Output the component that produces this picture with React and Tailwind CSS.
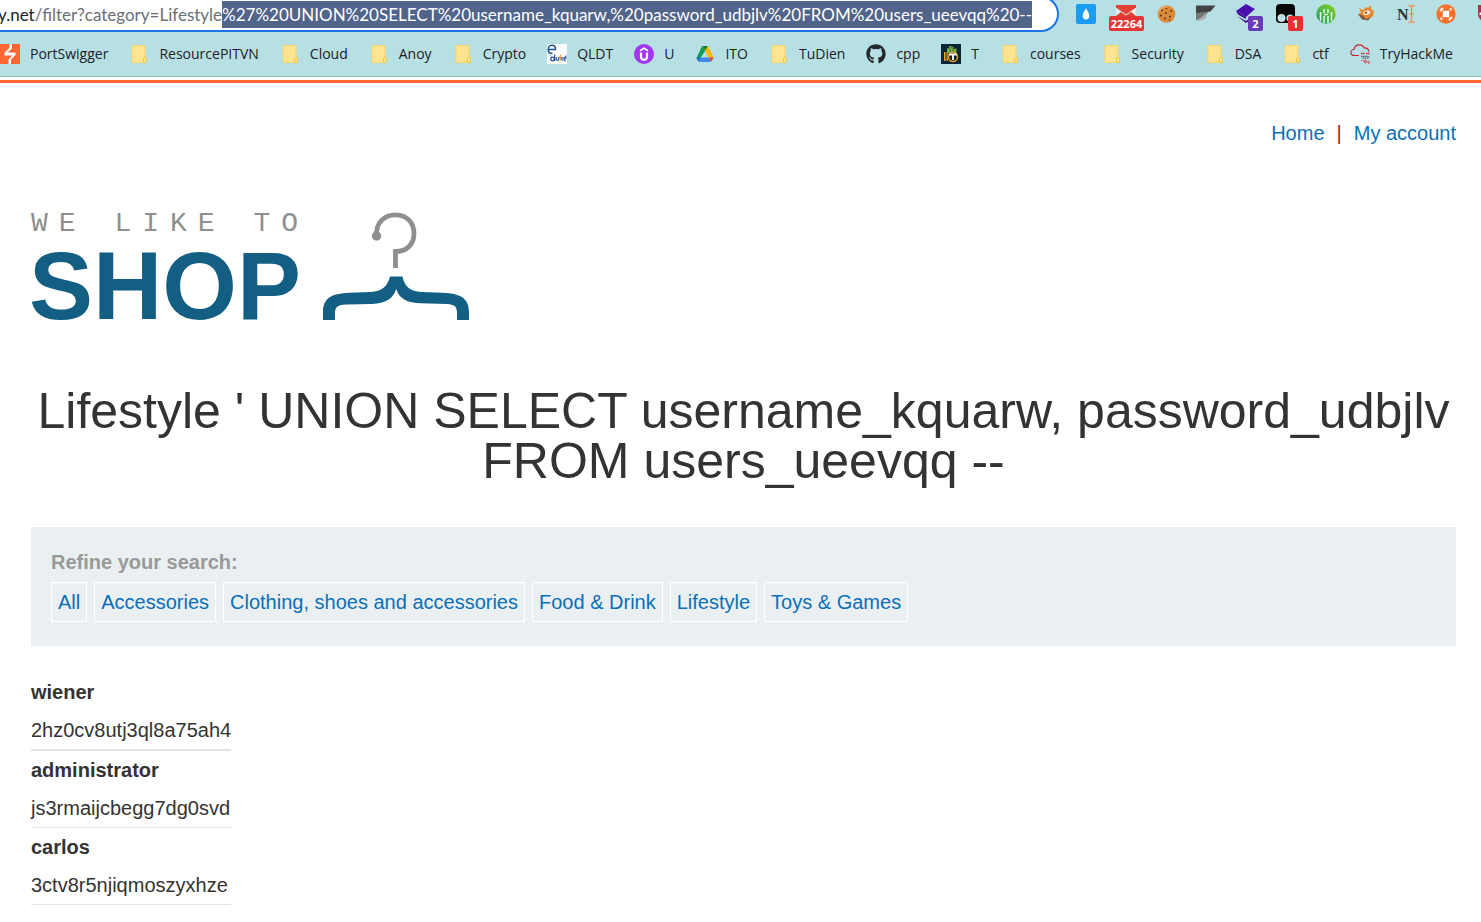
import React, { useEffect, useRef } from "react";
import { FaGithub } from "react-icons/fa";

const HOST = "y.net";
const PATH = "/filter?category=Lifestyle";
const PAYLOAD =
  "%27%20UNION%20SELECT%20username_kquarw,%20password_udbjlv%20FROM%20users_ueevqq%20--";

/* ---------- bookmark icons ---------- */

function Folder() {
  return (
    <svg viewBox="0 0 20 20" className="h-5 w-5 shrink-0" aria-hidden="true">
      <path d="M3 1.500h13v11.500l1.500 1v4.500h-14.500z" fill="#ffe592" stroke="#f7d568" strokeWidth="1" />
      <path d="M14.500 18.500v-4.500l1.500-1 1.500 1v4.500z" fill="#ffe592" stroke="#f2c84b" strokeWidth="1" />
    </svg>
  );
}

function PortSwigger() {
  return (
    <svg viewBox="0 0 20 20" className="h-5 w-5 shrink-0" aria-hidden="true">
      <rect width="20" height="20" fill="#ff6633" />
      <path d="M9.500 0H12v4.500L7.500 8.500h8v2.500l-4.500 4.500V20H8.500v-4.500l4-4H4.500V8.500L9.500 4z" fill="#fff" />
    </svg>
  );
}

function Edusoft() {
  return (
    <svg viewBox="0 0 20 20" className="h-5 w-5 shrink-0" aria-hidden="true">
      <rect width="20" height="20" fill="#fff" />
      <path d="M2 5.500h6.500C8.500 2.500 7 1.200 5 1.200 2.500 1.200 1.200 3.200 1.200 5.500S3 9.500 5.500 9.500" fill="none" stroke="#1c4f9c" strokeWidth="1.500" />
      <path d="M1 9.500c2 1 3 2.500 3.500 4" fill="none" stroke="#7da2d6" strokeWidth="1" />
      <circle cx="5.500" cy="15" r="1.800" fill="none" stroke="#27509c" strokeWidth="1.300" />
      <path d="M7.600 10.500v6.500M9.300 13v2.500q1.200 2 2.500 0V13" fill="none" stroke="#27509c" strokeWidth="1.200" />
      <path d="M14.500 9l-3 5h2l-1.500 5 3.500-6h-2z" fill="#f08c28" />
      <circle cx="15.800" cy="15" r="1.300" fill="none" stroke="#27509c" strokeWidth="1" />
      <path d="M18 17.500V13q.3-1.500 1.700-1M17 14h3" fill="none" stroke="#27509c" strokeWidth="1" />
    </svg>
  );
}

function Udemy() {
  return (
    <svg viewBox="0 0 20 20" className="h-5 w-5 shrink-0" aria-hidden="true">
      <circle cx="10" cy="10" r="10" fill="#a435f0" />
      <path d="M6 6.700L10 4.200l4 2.500" fill="none" stroke="#fff" strokeWidth="1.800" />
      <path d="M7 8.500v4.300a3 3 0 0 0 6 0V8.500" fill="none" stroke="#fff" strokeWidth="2.200" />
    </svg>
  );
}

function Drive() {
  return (
    <svg viewBox="0 0 20 20" className="h-5 w-5 shrink-0" aria-hidden="true">
      <path d="M7 2h1.500l2 4.500L5.500 14 4 18 1.500 14z" fill="#11a05a" />
      <path d="M7.500 2h5.300l6 11.500h-5.300z" fill="#fbb904" />
      <path d="M7.500 2h5.300L10.300 6.500z" fill="#188038" />
      <path d="M5.800 13.500h8L15.500 18H3.800z" fill="#4285f4" />
      <path d="M13.500 13.500h5.300L16 18z" fill="#ea4335" />
      <path d="M1.200 13.500h4.600L3.600 17.500z" fill="#1967d2" />
    </svg>
  );
}

function Tiger() {
  return (
    <svg viewBox="0 0 20 20" className="h-5 w-5 shrink-0" aria-hidden="true">
      <rect width="20" height="20" fill="#0b2437" />
      <path d="M6 8V4.500l2-.5V2h2.500v2l2-2v3l3-.5V9H6z" fill="#79ad3c" />
      <path d="M9 3v5M12 4v4" stroke="#2f6a2c" strokeWidth=".8" />
      <path d="M3 8h1.500v9H3zM5.500 8.500H7L6.500 12 7 17H5.500z" fill="#f0a31c" />
      <circle cx="12" cy="13" r="4.500" fill="#0b2437" stroke="#e5a11b" strokeWidth="1.500" />
      <path d="M8 9.500h8v2h-3V16h-2v-4.500H8z" fill="#f4f1e8" />
    </svg>
  );
}

function Github() {
  return <FaGithub className="h-5 w-5 shrink-0 text-[#24292e]" aria-hidden="true" />;
}

function TryHackMe() {
  return (
    <svg viewBox="0 0 20 20" className="h-5 w-5 shrink-0" aria-hidden="true">
      <path d="M9 11.500H4.500C2.300 11.500.8 10.300.8 8.500s1.500-3 3.200-3C4.500 2.500 6.800.8 9.300.8c2.400 0 4.200 1.300 4.900 3.200 2.500-.3 4.500 1.200 4.800 3.700" fill="none" stroke="#c8202f" strokeWidth="1.200" />
      <path d="M11 9.500h3.500M16 9.500h3.500" stroke="#c8202f" strokeWidth="1.300" strokeDasharray="1.500 .6" />
      <path d="M11 12.300h8.500M12.500 14.200h7" stroke="#59636f" strokeWidth="1.200" strokeDasharray="1.600 .5" />
      <path d="M11.500 16.500h3v2.500M15.500 19.500v-3l3.500 3v-3" fill="none" stroke="#c76a75" strokeWidth="1.100" />
    </svg>
  );
}

const BOOKMARKS = [
  ["PortSwigger", PortSwigger],
  ["ResourcePITVN", Folder],
  ["Cloud", Folder],
  ["Anoy", Folder],
  ["Crypto", Folder],
  ["QLDT", Edusoft],
  ["U", Udemy],
  ["ITO", Drive],
  ["TuDien", Folder],
  ["cpp", Github],
  ["T", Tiger],
  ["courses", Folder],
  ["Security", Folder],
  ["DSA", Folder],
  ["ctf", Folder],
  ["TryHackMe", TryHackMe],
];

/* ---------- extension icons ---------- */

function Badge({ className, children }) {
  return (
    <span className={"absolute rounded-xs text-center font-['Open_Sans',sans-serif] text-[11px] leading-[15px] font-bold text-white " + className}>
      {children}
    </span>
  );
}

function Glyph({ children }) {
  return (
    <svg viewBox="0 0 20 20" className="h-5 w-5" aria-hidden="true">
      {children}
    </svg>
  );
}

const EXTENSIONS = [
  {
    name: "Color drop",
    icon: (
      <Glyph>
        <rect width="20" height="20" rx="2" fill="#1a9cf0" />
        <path d="M10 4.200c1.800 3.300 3.300 5 3.300 7.500a3.300 3.700 0 0 1-6.600 0c0-2.500 1.500-4.200 3.300-7.500z" fill="#fff" />
      </Glyph>
    ),
  },
  {
    name: "Mail",
    icon: (
      <Glyph>
        <rect y="1" width="20" height="16" fill="#e0e0e0" />
        <path d="M0 1h20v2.500L10 10.500 0 3.500z" fill="#e34133" />
        <path d="M0 4.500l10 7 10-7V17H0z" fill="#e9eceb" />
        <path d="M0 12l5-4 5 3.500L15 8l5 4v5H0z" fill="#e34133" />
      </Glyph>
    ),
    badge: <Badge className="top-4 left-[3px] w-[35px] overflow-hidden bg-[#e33535]">22264</Badge>,
  },
  {
    name: "Cookies",
    icon: (
      <Glyph>
        <circle cx="10.500" cy="10" r="8.800" fill="#d98b3a" />
        <path d="M3 8a8 8 0 0 1 8-5.500" fill="none" stroke="#efb267" strokeWidth="1.500" />
        <g fill="#6b3a16">
          <circle cx="6" cy="6.500" r="1" /><circle cx="10" cy="9" r="1.100" />
          <circle cx="5" cy="11.500" r="1.100" /><circle cx="9" cy="14.500" r="1.100" />
          <circle cx="14" cy="12.500" r="1.100" /><circle cx="10.500" cy="4.500" r=".8" />
          <circle cx="13.500" cy="16" r=".8" /><circle cx="15" cy="7" r="1" />
        </g>
      </Glyph>
    ),
  },
  {
    name: "Proxy",
    icon: (
      <Glyph>
        <path d="M0 8.500L13 6l-3 5.500L0 16.500z" fill="#777" />
        <path d="M1 17.500L10 9v5.500z" fill="#aaa" />
        <path d="M0 1.500h19.500L14.500 7.500 0 9z" fill="#444" />
      </Glyph>
    ),
  },
  {
    name: "Layers",
    icon: (
      <Glyph>
        <path d="M0 7l10-7 9 5-9 8z" fill="#4a0fae" />
        <path d="M0 7l10 6v2L2 10.500zM1 12l9 5 6-4.500v2.500l-6 4z" fill="#3a0a90" />
      </Glyph>
    ),
    badge: <Badge className="top-4 left-[22px] w-[15px] bg-[#693bbb]">2</Badge>,
  },
  {
    name: "Monkey scripts",
    icon: (
      <Glyph>
        <rect x="0" y="0" width="19" height="19" rx="4" fill="#080808" />
        <circle cx="5.500" cy="14" r="3.600" fill="#b7e0e4" stroke="#fff" strokeWidth=".8" />
        <circle cx="14" cy="14" r="3.600" fill="#b7e0e4" />
      </Glyph>
    ),
    badge: <Badge className="top-4 left-[22px] w-[15px] bg-[#ec2d33]">1</Badge>,
  },
  {
    name: "Circuit",
    icon: (
      <Glyph>
        <defs>
          <linearGradient id="circuit" x1="0" y1="1" x2="1" y2="0">
            <stop offset="0" stopColor="#12a06a" />
            <stop offset="1" stopColor="#8fd01e" />
          </linearGradient>
        </defs>
        <circle cx="10" cy="10" r="9.700" fill="url(#circuit)" />
        <path d="M4.500 8v9M8 5v4M8 12v7M12 5v4M12 12v7M15.500 8v9M8 10.500h4" stroke="#e9f8ea" strokeWidth="1.500" />
      </Glyph>
    ),
  },
  {
    name: "Brush",
    icon: (
      <Glyph>
        <path d="M3 4l4 2 3-3 2 1 3-3v4l3 2-1 5-5 3.500-6-1-4-4 3-2z" fill="#e8872f" />
        <path d="M2 10l4 1 4 4 5-2-3 3.500-6-1z" fill="#7c5a44" />
        <path d="M7 8l5-2 3 2-3 3-4 0z" fill="#f5e3cb" />
        <path d="M9 8.500l2 .5" stroke="#5a3a22" strokeWidth="1.300" />
      </Glyph>
    ),
  },
  {
    name: "Text cursor",
    icon: (
      <Glyph>
        <text x="1" y="16" fontFamily="Liberation Serif, serif" fontSize="16" fontWeight="700" fill="#2d3436">N</text>
        <path d="M12.500 1.500q2.500 0 3 1.500.5-1.500 3-1.500M15.500 3v14M12.500 18.500q2.500 0 3-1.500.5 1.500 3 1.500M13.500 10h4" fill="none" stroke="#f09050" strokeWidth="1.300" />
      </Glyph>
    ),
  },
  {
    name: "Orange hub",
    icon: (
      <Glyph>
        <circle cx="10" cy="10" r="9.700" fill="#f6712b" />
        <circle cx="10" cy="10" r="3.200" fill="#fff" />
        <path d="M7 7l2 2M13 7l-2 2M7 13l2-2M13 13l-2-2" stroke="#fff" strokeWidth="2" />
        <path d="M4 7l3-3M13 16l3-3M14 4.500l1.500 1.500M4.500 14L6 15.500" stroke="#fff" strokeWidth="1.800" />
      </Glyph>
    ),
  },
  {
    name: "Shield",
    icon: (
      <Glyph>
        <path d="M2 1h18v9c0 5-5 8-9 10-4-2-9-5-9-10z" fill="#9b3b4b" />
        <path d="M3.500 8.500h14v2.500h-14z" fill="#fff" />
      </Glyph>
    ),
  },
];

/* ---------- browser chrome ---------- */

function AddressBar() {
  const ref = useRef(null);
  useEffect(() => {
    ref.current.focus();
    ref.current.setSelectionRange(PATH.length, PATH.length + PAYLOAD.length);
  }, []);
  return (
    <div className="-mt-1 flex h-9 min-w-0 flex-1 items-center overflow-hidden rounded-r-full border-2 border-l-0 border-[#1a73e8] bg-white font-['Lato',sans-serif] text-[17px] leading-[27px]">
      <label htmlFor="address" className="-ml-0.5 text-[#202124]">{HOST}</label>
      <input
        id="address"
        ref={ref}
        type="text"
        spellCheck={false}
        defaultValue={PATH + PAYLOAD}
        className="h-[27px] min-w-0 flex-1 text-[#6b7074] outline-none selection:bg-[#51648a] selection:text-white"
      />
    </div>
  );
}

function BrowserChrome() {
  return (
    <header className="overflow-hidden border-b border-[#96b3b6] bg-[#b7e0e4]">
      <div className="flex h-8 gap-[7px]">
        <AddressBar />
        <div className="flex w-[415px] shrink-0 overflow-hidden">
          {EXTENSIONS.map((e) => (
            <button key={e.name} type="button" aria-label={e.name} className="relative flex w-10 shrink-0 justify-center pt-1">
              {e.icon}
              {e.badge}
            </button>
          ))}
        </div>
      </div>
      <nav aria-label="Bookmarks" className="flex h-11 items-center gap-[21px] font-['Open_Sans',sans-serif] text-sm leading-5 text-[#202124]">
        {BOOKMARKS.map(([name, Icon]) => (
          <a key={name} href="#" className="flex shrink-0 items-center gap-2.5">
            <Icon />
            {name}
          </a>
        ))}
      </nav>
    </header>
  );
}

/* ---------- shop page ---------- */

function Logo() {
  return (
    <div className="mt-16 flex items-start gap-3.5">
      <div>
        <div className="font-['Liberation_Mono',monospace] text-[28px] leading-6 tracking-[11px] whitespace-nowrap text-[#8e8f90]">
          WE LIKE TO
        </div>
        <div className="-ml-0.5 text-[96px] leading-[100px] font-bold text-[#125f83]">SHOP</div>
      </div>
      <svg viewBox="0 0 146 109" className="h-[109px] w-[146px] shrink-0" aria-hidden="true">
        <path d="M53.500 23.500C53 11 61 2.800 72.500 2.800S91 11 91 21.500 84 39.500 72.500 39.500V56" fill="none" stroke="#8e8f90" strokeWidth="4.800" />
        <circle cx="53.500" cy="24" r="4.700" fill="#8e8f90" />
        <path d="M67 64.500h12.500c1.500 9.500 8 15 19 15.500l21 .8C137 81.500 146 86 146 100v8h-12v-7c0-7-3-8.500-10-9l-26-.8C84 91 76.500 87 73.200 77 70 87 62.500 91 49 92l-26 .5c-8 .3-11 2-11 9v6.500H0v-8C0 86.500 8 81.500 26.500 80.800l21-.8c11-.5 17.500-6 19.500-15.500z" fill="#125f83" />
      </svg>
    </div>
  );
}

const CATEGORIES = ["All", "Accessories", "Clothing, shoes and accessories", "Food & Drink", "Lifestyle", "Toys & Games"];

const USERS = [
  ["wiener", "2hz0cv8utj3ql8a75ah4"],
  ["administrator", "js3rmaijcbegg7dg0svd"],
  ["carlos", "3ctv8r5njiqmoszyxhze"],
];

export default function App() {
  return (
    <div className="min-h-screen overflow-hidden bg-white font-['Liberation_Sans',Arial,sans-serif] text-xl leading-[30px] text-[#333332]">
      <BrowserChrome />
      <main className="mt-[3px] border-t-[3px] border-[#ff6633] pt-[35px] pr-[25px] pl-[31px]">
        <nav aria-label="Account" className="flex justify-end gap-3 text-[#0b6fb8]">
          <a href="#">Home</a>
          <span className="text-[#8a2a1a]">|</span>
          <a href="#">My account</a>
        </nav>

        <Logo />

        <h1 className="mt-[50px] text-center text-[50px] leading-[50px]">
          Lifestyle ' UNION SELECT username_kquarw, password_udbjlv FROM users_ueevqq --
        </h1>

        <section className="mt-[41px] bg-[#eaf0f2] px-5 pt-5 pb-6">
          <h2 className="font-bold text-[#999997]">Refine your search:</h2>
          <div className="mt-[5px] flex flex-wrap gap-[7px]">
            {CATEGORIES.map((c) => (
              <a key={c} href="#" className="border border-white px-1.5 py-1 text-[#0b6fb8]">
                {c}
              </a>
            ))}
          </div>
        </section>

        <table className="mt-[27px] border-separate border-spacing-0 text-left leading-[38px]">
          <tbody>
            {USERS.map(([name, password], i) => (
              <React.Fragment key={name}>
                <tr>
                  <th scope="row" className="p-0 font-bold">{name}</th>
                </tr>
                <tr>
                  <td className={i === 0 ? "border-b-2 border-[#e4e4e4] p-0" : "border-b border-[#e4e4e4] p-0"}>
                    {password}
                  </td>
                </tr>
              </React.Fragment>
            ))}
          </tbody>
        </table>
      </main>
    </div>
  );
}
